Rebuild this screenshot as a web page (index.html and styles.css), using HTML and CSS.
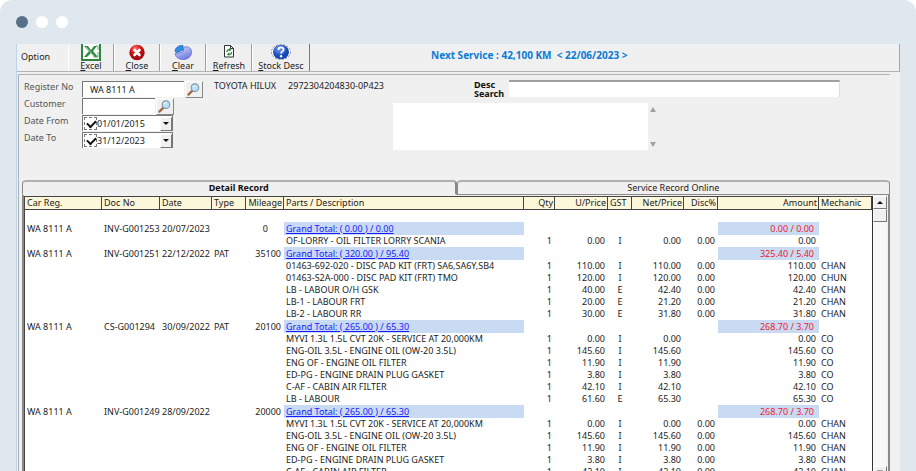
FILE: index.html
```html
<!DOCTYPE html>
<html lang="en">
<head>
<meta charset="utf-8">
<title>Service Record</title>
<link rel="stylesheet" href="styles.css">
</head>
<body>
<div class="frame">
  <div class="dots"><span class="dot dot-active"></span><span class="dot"></span><span class="dot"></span></div>
  <main class="window">
    <header class="toolbar">
      <span class="option">Option</span>
      <button class="tool" type="button">
        <svg class="tool-icon" viewBox="0 0 24 17"><rect x="3" y="-3" width="18" height="19" fill="#fff" stroke="#2e8540" stroke-width="2"/><path d="M5 2h4l3 4 3-4h3l-4 5 5 6h-4l-3-4-4 4H5l5-6z" fill="#2c8a43"/><path d="M7 3l8 9" stroke="#9bcaa0"/><path d="M15 13h4v-5M17 2h2v4" fill="none" stroke="#6fae79"/></svg>
        <span><u>E</u>xcel</span>
      </button>
      <button class="tool" type="button">
        <svg class="tool-icon" viewBox="0 0 24 17"><defs><radialGradient id="red" cx=".4" cy=".25"><stop offset="0" stop-color="#ff7a70"/><stop offset=".6" stop-color="#dc1d20"/><stop offset="1" stop-color="#a80d12"/></radialGradient></defs><circle cx="12" cy="8.500" r="7.700" fill="url(#red)"/><path d="M9.500 6l5 5M14.500 6l-5 5" stroke="#fff" stroke-width="2.600" stroke-linecap="round"/></svg>
        <span><u>C</u>lose</span>
      </button>
      <button class="tool" type="button">
        <svg class="tool-icon" viewBox="0 0 24 17"><defs><linearGradient id="pie" x2=".6" y2="1"><stop offset="0" stop-color="#dfe4ff"/><stop offset="1" stop-color="#6d7ae0"/></linearGradient></defs><path d="M13 3c5-1 8 1.500 7.500 6-.5 4-4 6.500-8 6.500-4.500 0-8-2-8.500-6L12 8z" fill="url(#pie)" stroke="#5a68ca" stroke-width=".7"/><path d="M4 7.500c0-4 4-6.500 8-6V6L6 8.500z" fill="#2f8de4" stroke="#1c60b4" stroke-width=".7"/></svg>
        <span><u>C</u>lear</span>
      </button>
      <button class="tool" type="button">
        <svg class="tool-icon" viewBox="0 0 24 17"><path d="M7.500 1.500h6l3 3V13h-9z" fill="#fff" stroke="#333"/><path d="M13.500 1.500v3h3" fill="none" stroke="#333"/><path d="M10 8c0-2 1-2.500 2.500-2M14.500 8c0 2-1 2.700-2.500 2" fill="none" stroke="#238a2d" stroke-width="1.300"/><path d="M12 4l2.500 1.700-2.500 1.700zM12.300 8.500l-2.500 1.700 2.500 1.700z" fill="#238a2d"/></svg>
        <span><u>R</u>efresh</span>
      </button>
      <button class="tool tool-wide" type="button">
        <svg class="tool-icon" viewBox="0 0 24 17"><defs><radialGradient id="blue" cx=".4" cy=".3"><stop offset="0" stop-color="#6f9cf5"/><stop offset="1" stop-color="#1746b8"/></radialGradient></defs><ellipse cx="12" cy="8" rx="9.500" ry="7.500" fill="#fff" stroke="#777" stroke-width=".8" stroke-dasharray="2 1.500"/><ellipse cx="12" cy="8" rx="8" ry="7.300" fill="url(#blue)"/><path d="M9.300 6c.2-3.600 5.600-3.200 5.300-.3-.1 1.700-2.500 1.700-2.500 3.800" fill="none" stroke="#fff" stroke-width="1.800"/><circle cx="12.100" cy="12.300" r="1.200" fill="#fff"/></svg>
        <span><u>S</u>tock Desc</span>
      </button>
      <p class="next">Next Service : 42,100 KM  &lt; 22/06/2023 &gt;</p>
    </header>

    <section class="panel">
      <form class="search">
        <div class="fields">
          <label for="reg">Register No</label>
          <div class="field">
            <input class="text reg" id="reg" type="text" value="WA 8111 A">
            <button class="find" type="button" aria-label="Find register"><svg viewBox="0 0 16 16"><path d="M7 9l-4.500 4.500" stroke="#a3673c" stroke-width="2.400" stroke-linecap="round"/><circle cx="9.500" cy="6" r="4" fill="#b9e3f8" stroke="#8295a5" stroke-width="1.200"/><path d="M7.500 5.500c.4-1.200 1.500-1.700 2.500-1.500" fill="none" stroke="#fff"/></svg></button>
          </div>
          <label for="cust">Customer</label>
          <div class="field">
            <input class="text cust" id="cust" type="text">
            <button class="find" type="button" aria-label="Find customer"><svg viewBox="0 0 16 16"><path d="M7 9l-4.500 4.500" stroke="#a3673c" stroke-width="2.400" stroke-linecap="round"/><circle cx="9.500" cy="6" r="4" fill="#b9e3f8" stroke="#8295a5" stroke-width="1.200"/><path d="M7.500 5.500c.4-1.200 1.500-1.700 2.500-1.500" fill="none" stroke="#fff"/></svg></button>
          </div>
          <label for="from">Date From</label>
          <div class="field date">
            <input class="tick" type="checkbox" checked aria-label="Use date from">
            <input class="day" id="from" type="text" value="01/01/2015">
            <button class="drop" type="button" aria-label="Pick date from"></button>
          </div>
          <label for="to">Date To</label>
          <div class="field date">
            <input class="tick" type="checkbox" checked aria-label="Use date to">
            <input class="day" id="to" type="text" value="31/12/2023">
            <button class="drop" type="button" aria-label="Pick date to"></button>
          </div>
        </div>
        <p class="vehicle"><span>TOYOTA HILUX</span><span>2972304204830-0P423</span></p>
        <div class="desc">
          <div class="desc-row">
            <label for="desc">Desc Search</label>
            <input class="desc-input" id="desc" type="text">
          </div>
          <div class="note-row">
            <textarea class="note" aria-label="Notes"></textarea>
            <div class="note-scroll"><span class="tri tri-up"></span><span class="tri tri-down"></span></div>
          </div>
        </div>
      </form>

      <div class="tabs">
        <button class="tab tab-active" type="button">Detail Record</button>
        <button class="tab" type="button">Service Record Online</button>
      </div>

      <div class="grid">
        <table class="records">
          <colgroup><col class="c-reg"><col class="c-doc"><col class="c-date"><col class="c-type"><col class="c-mile"><col><col class="c-qty"><col class="c-price"><col class="c-gst"><col class="c-net"><col class="c-disc"><col class="c-amt"><col class="c-mech"></colgroup>
          <thead>
            <tr><th>Car Reg.</th><th>Doc No</th><th>Date</th><th>Type</th><th class="r">Mileage</th><th>Parts / Description</th><th class="r">Qty</th><th class="r">U/Price</th><th>GST</th><th class="r">Net/Price</th><th class="r">Disc%</th><th class="r">Amount</th><th>Mechanic</th></tr>
          </thead>
          <tbody>
            <tr class="blank"><td colspan="13"></td></tr>
            <tr class="total"><td>WA 8111 A</td><td>INV-G001253</td><td>20/07/2023</td><td></td><td class="mid">0</td><td class="hl"><a href="#">Grand Total: ( 0.00 ) / 0.00</a></td><td></td><td></td><td></td><td></td><td></td><td class="hl sum">0.00 / 0.00</td><td></td></tr>
            <tr><td></td><td></td><td></td><td></td><td></td><td>OF-LORRY - OIL FILTER LORRY SCANIA</td><td class="r">1</td><td class="r">0.00</td><td class="c">I</td><td class="r">0.00</td><td class="r">0.00</td><td class="r">0.00</td><td></td></tr>
          </tbody>
          <tbody>
            <tr class="total"><td>WA 8111 A</td><td>INV-G001251</td><td>22/12/2022</td><td>PAT</td><td class="r">35100</td><td class="hl"><a href="#">Grand Total: ( 320.00 ) / 95.40</a></td><td></td><td></td><td></td><td></td><td></td><td class="hl sum">325.40 / 5.40</td><td></td></tr>
            <tr><td></td><td></td><td></td><td></td><td></td><td>01463-692-020 - DISC PAD KIT (FRT) SA6,SA6Y,SB4</td><td class="r">1</td><td class="r">110.00</td><td class="c">I</td><td class="r">110.00</td><td class="r">0.00</td><td class="r">110.00</td><td>CHAN</td></tr>
            <tr><td></td><td></td><td></td><td></td><td></td><td>01463-S2A-000 - DISC PAD KIT (FRT) TMO</td><td class="r">1</td><td class="r">120.00</td><td class="c">I</td><td class="r">120.00</td><td class="r">0.00</td><td class="r">120.00</td><td>CHUN</td></tr>
            <tr><td></td><td></td><td></td><td></td><td></td><td>LB - LABOUR O/H GSK</td><td class="r">1</td><td class="r">40.00</td><td class="c">E</td><td class="r">42.40</td><td class="r">0.00</td><td class="r">42.40</td><td>CHAN</td></tr>
            <tr><td></td><td></td><td></td><td></td><td></td><td>LB-1 - LABOUR FRT</td><td class="r">1</td><td class="r">20.00</td><td class="c">E</td><td class="r">21.20</td><td class="r">0.00</td><td class="r">21.20</td><td>CHAN</td></tr>
            <tr><td></td><td></td><td></td><td></td><td></td><td>LB-2 - LABOUR RR</td><td class="r">1</td><td class="r">30.00</td><td class="c">E</td><td class="r">31.80</td><td class="r">0.00</td><td class="r">31.80</td><td>CHAN</td></tr>
          </tbody>
          <tbody>
            <tr class="total"><td>WA 8111 A</td><td>CS-G001294</td><td>30/09/2022</td><td>PAT</td><td class="r">20100</td><td class="hl"><a href="#">Grand Total: ( 265.00 ) / 65.30</a></td><td></td><td></td><td></td><td></td><td></td><td class="hl sum">268.70 / 3.70</td><td></td></tr>
            <tr><td></td><td></td><td></td><td></td><td></td><td>MYVI 1.3L 1.5L CVT 20K - SERVICE AT 20,000KM</td><td class="r">1</td><td class="r">0.00</td><td class="c">I</td><td class="r">0.00</td><td></td><td class="r">0.00</td><td>CO</td></tr>
            <tr><td></td><td></td><td></td><td></td><td></td><td>ENG-OIL 3.5L - ENGINE OIL (OW-20 3.5L)</td><td class="r">1</td><td class="r">145.60</td><td class="c">I</td><td class="r">145.60</td><td></td><td class="r">145.60</td><td>CO</td></tr>
            <tr><td></td><td></td><td></td><td></td><td></td><td>ENG OF - ENGINE OIL FILTER</td><td class="r">1</td><td class="r">11.90</td><td class="c">I</td><td class="r">11.90</td><td></td><td class="r">11.90</td><td>CO</td></tr>
            <tr><td></td><td></td><td></td><td></td><td></td><td>ED-PG - ENGINE DRAIN PLUG GASKET</td><td class="r">1</td><td class="r">3.80</td><td class="c">I</td><td class="r">3.80</td><td></td><td class="r">3.80</td><td>CO</td></tr>
            <tr><td></td><td></td><td></td><td></td><td></td><td>C-AF - CABIN AIR FILTER</td><td class="r">1</td><td class="r">42.10</td><td class="c">I</td><td class="r">42.10</td><td></td><td class="r">42.10</td><td>CO</td></tr>
            <tr><td></td><td></td><td></td><td></td><td></td><td>LB - LABOUR</td><td class="r">1</td><td class="r">61.60</td><td class="c">E</td><td class="r">65.30</td><td></td><td class="r">65.30</td><td>CO</td></tr>
          </tbody>
          <tbody>
            <tr class="total"><td>WA 8111 A</td><td>INV-G001249</td><td>28/09/2022</td><td></td><td class="r">20000</td><td class="hl"><a href="#">Grand Total: ( 265.00 ) / 65.30</a></td><td></td><td></td><td></td><td></td><td></td><td class="hl sum">268.70 / 3.70</td><td></td></tr>
            <tr><td></td><td></td><td></td><td></td><td></td><td>MYVI 1.3L 1.5L CVT 20K - SERVICE AT 20,000KM</td><td class="r">1</td><td class="r">0.00</td><td class="c">I</td><td class="r">0.00</td><td class="r">0.00</td><td class="r">0.00</td><td>CHAN</td></tr>
            <tr><td></td><td></td><td></td><td></td><td></td><td>ENG-OIL 3.5L - ENGINE OIL (OW-20 3.5L)</td><td class="r">1</td><td class="r">145.60</td><td class="c">I</td><td class="r">145.60</td><td class="r">0.00</td><td class="r">145.60</td><td>CHAN</td></tr>
            <tr><td></td><td></td><td></td><td></td><td></td><td>ENG OF - ENGINE OIL FILTER</td><td class="r">1</td><td class="r">11.90</td><td class="c">I</td><td class="r">11.90</td><td class="r">0.00</td><td class="r">11.90</td><td>CHAN</td></tr>
            <tr><td></td><td></td><td></td><td></td><td></td><td>ED-PG - ENGINE DRAIN PLUG GASKET</td><td class="r">1</td><td class="r">3.80</td><td class="c">I</td><td class="r">3.80</td><td class="r">0.00</td><td class="r">3.80</td><td>CHAN</td></tr>
            <tr><td></td><td></td><td></td><td></td><td></td><td>C-AF - CABIN AIR FILTER</td><td class="r">1</td><td class="r">42.10</td><td class="c">I</td><td class="r">42.10</td><td class="r">0.00</td><td class="r">42.10</td><td>CHAN</td></tr>
          </tbody>
        </table>
        <div class="scrollbar">
          <button class="scroll-btn" type="button" aria-label="Scroll up"><span class="tri tri-up tri-dark"></span></button>
          <div class="thumb"></div>
          <button class="scroll-btn scroll-end" type="button" aria-label="Scroll down"><span class="tri tri-down"></span></button>
        </div>
      </div>
    </section>
  </main>
</div>
</body>
</html>
```
FILE: styles.css
```css
* { box-sizing: border-box; }

body {
  margin: 0;
  background: #fff;
  color: #1c1c1c;
  font: 9px/12px "Noto Sans", "Liberation Sans", sans-serif;
}

p { margin: 0; }

button, input, textarea {
  margin: 0;
  padding: 0;
  border: 0;
  border-radius: 0;
  color: inherit;
  font: inherit;
}

.frame {
  display: flex;
  flex-direction: column;
  height: 100vh;
  overflow: hidden;
  padding: 0 16px;
  background: #e0e8ef;
  border-radius: 12px 12px 0 0;
}

.dots {
  display: flex;
  flex: none;
  gap: 8px;
  height: 44px;
  padding-top: 16px;
}

.dot {
  width: 12px;
  height: 12px;
  border-radius: 50%;
  background: #fff;
}

.dot-active { background: #567189; }

.window {
  display: flex;
  flex: 1;
  flex-direction: column;
  min-height: 0;
  background: #f0f0f0;
  border-left: 1px solid #bcd3e8;
}

/* Toolbar */
.toolbar {
  display: flex;
  flex: none;
  height: 28px;
  border-right: 1px solid #a6a6a6;
  border-bottom: 1px solid #b4b4b4;
}

.option {
  width: 51px;
  padding: 7px 0 0 4px;
}

.tool {
  display: flex;
  flex-direction: column;
  align-items: center;
  width: 46px;
  background: #efefef;
  border-left: 1px solid #fff;
  border-right: 1px solid #a0a0a0;
}

.tool-wide {
  width: 58px;
  border-right: 1px solid #777;
}

.tool span { line-height: 9px; }

.tool-icon {
  flex: none;
  width: 24px;
  height: 17px;
}

.next {
  padding: 5px 0 0 121px;
  color: #0a7bd6;
  font-size: 10px;
  font-weight: 700;
  white-space: pre;
}

/* Search panel */
.panel {
  display: flex;
  flex: 1;
  flex-direction: column;
  min-height: 0;
  margin: 2px 10px 0 1px;
  border: solid #b0b0b0;
  border-width: 1px 0 0 1px;
}

.search {
  display: flex;
  flex: none;
  height: 105px;
  padding: 5px 50px 0 5px;
}

.fields {
  display: grid;
  grid-template-columns: 58px 121px;
  grid-auto-rows: 17px;
  width: 190px;
  padding-top: 1px;
  color: #555;
}

.field {
  display: flex;
  gap: 1px;
  color: #1c1c1c;
}

.text {
  height: 16px;
  background: #fff;
  border: solid #777;
  border-width: 1px 0 0 1px;
}

.reg {
  width: 102px;
  padding-left: 7px;
}

.cust { width: 73px; }

.find {
  width: 18px;
  height: 17px;
  background: #f0f0f0;
  border: 1px solid;
  border-color: #fff #888 #888 #fff;
}

.find svg {
  display: block;
  width: 15px;
  height: 15px;
}

.date {
  align-items: center;
  gap: 0;
  width: 91px;
  height: 16px;
  padding-left: 1px;
  background: #fff;
  border: solid #777;
  border-width: 1px 1px 0 1px;
}

.tick {
  appearance: none;
  flex: none;
  width: 13px;
  height: 13px;
  border: 1px dashed #777;
  background: #fff;
}

.tick:checked::before {
  content: "";
  display: block;
  width: 7px;
  height: 4px;
  margin: 2px;
  border: solid #111;
  border-width: 0 0 2px 2px;
  transform: rotate(-45deg);
}

.day {
  flex: 1;
  min-width: 0;
  background: transparent;
}

.drop {
  display: grid;
  place-items: center;
  width: 12px;
  height: 14px;
  background: #f0f0f0;
  border: 1px solid;
  border-color: #fff #777 #777 #fff;
}

.drop::before {
  content: "";
  border: 3px solid transparent;
  border-top-color: #111;
  border-bottom-width: 0;
}

.vehicle {
  display: flex;
  gap: 12px;
  width: 179px;
}

.desc { flex: 1; }

.desc-row {
  display: flex;
  align-items: start;
  padding-left: 81px;
}

.desc-row label {
  width: 35px;
  color: #111;
  font-weight: 700;
  line-height: 9px;
}

.desc-input {
  flex: 1;
  min-width: 0;
  height: 17px;
  background: #fff;
  border-top: 2px solid #a0a0a0;
  border-right: 1px solid #ddd;
}

.note-row {
  display: flex;
  height: 47px;
  margin-top: 5px;
}

.note {
  width: 57%;
  background: #fff;
  resize: none;
}

.note-scroll {
  display: flex;
  flex-direction: column;
  justify-content: space-between;
  padding: 4px 2px 3px;
}

.tri {
  width: 0;
  border: 3px solid transparent;
}

.tri-up {
  border-top-width: 0;
  border-bottom: 5px solid #a0a0a0;
}

.tri-down {
  border-bottom-width: 0;
  border-top: 5px solid #a0a0a0;
}

.tri-dark { border-bottom: 3px solid #111; }

/* Tabs */
.tabs {
  display: flex;
  flex: none;
  height: 15px;
  margin-left: 3px;
}

.tab {
  flex: 1;
  background: #f0f0f0;
  border: 1px solid #8a8a8a;
  border-top: 2px solid #b0b0b0;
  border-radius: 4px 4px 0 0;
  line-height: 12px;
}

.tab-active {
  border-bottom-color: #f0f0f0;
  border-right-width: 2px;
  color: #111;
  font-weight: 700;
}

/* Records */
.grid {
  display: flex;
  flex: 1;
  align-items: stretch;
  min-height: 0;
  overflow: hidden;
  margin-left: 3px;
  padding: 1px 1px 0 0;
  border: solid #8a8a8a;
  border-width: 0 2px;
}

.records {
  flex: 1;
  align-self: start;
  width: 0;
  min-height: 100%;
  table-layout: fixed;
  border-spacing: 0;
  border-left: 1px solid #444;
  background: #fff;
}

.c-reg { width: 77px; }
.c-doc { width: 58px; }
.c-date { width: 52px; }
.c-type { width: 34px; }
.c-mile { width: 38px; }
.c-qty { width: 31px; }
.c-price { width: 53px; }
.c-gst { width: 24px; }
.c-net { width: 52px; }
.c-disc { width: 34px; }
.c-amt { width: 101px; }
.c-mech { width: 53px; }

.records th {
  height: 14px;
  padding: 0 1px 0 2px;
  background: #fcf6da;
  border: solid #444;
  border-width: 1px 1px 1px 0;
  font-weight: 400;
  line-height: 12px;
  text-align: left;
  white-space: nowrap;
}

.records td {
  height: 12px;
  padding: 0 2px;
  line-height: 12px;
  white-space: nowrap;
}

.records .total td { height: 13px; }

.records .r { text-align: right; }
.records td.r { padding-right: 3px; }
.records .c { text-align: center; }

.records td.mid {
  padding-right: 16px;
  text-align: right;
}

.records .hl { background: #c9daf3; }

.records .sum {
  padding-right: 5px;
  color: #ee1c2e;
  text-align: right;
}

.records a { color: #1a1aff; }

.scrollbar {
  display: flex;
  flex: none;
  flex-direction: column;
  width: 15px;
  background: #f8f8f8;
  border-left: 1px solid #333;
}

.scroll-btn, .thumb {
  flex: none;
  height: 13px;
  background: #f0f0f0;
  border: 1px solid;
  border-color: #fff #777 #777 #fff;
}

.scroll-btn {
  display: grid;
  place-items: center;
}

.scroll-end {
  margin-top: auto;
  margin-bottom: -8px;
}
```
